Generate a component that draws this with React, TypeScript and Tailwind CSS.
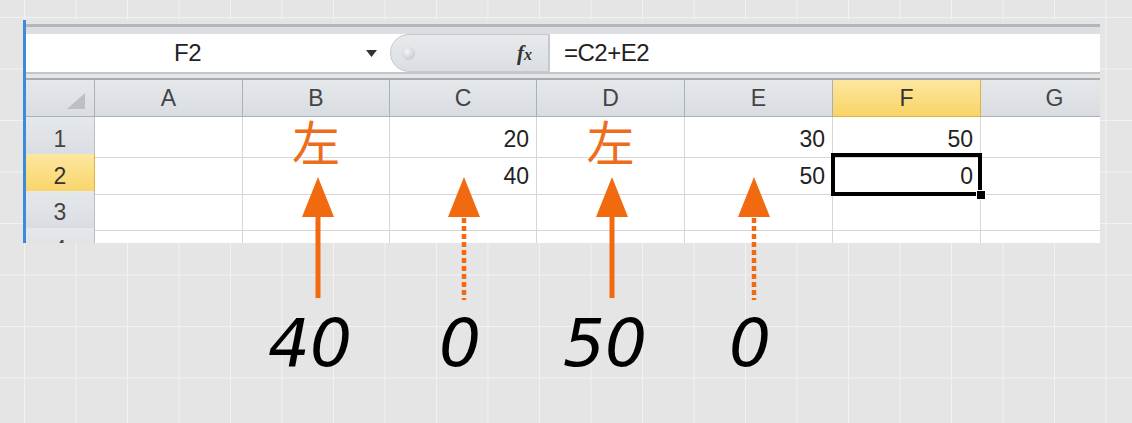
import React from 'react';

type Cell = { text?: string; kanji?: boolean; selected?: boolean };

const columns = ['A', 'B', 'C', 'D', 'E', 'F', 'G'];

const rows: { label: string; cells: Cell[] }[] = [
  { label: '1', cells: [{}, { text: '左', kanji: true }, { text: '20' }, { text: '左', kanji: true }, { text: '30' }, { text: '50' }, {}] },
  { label: '2', cells: [{}, {}, { text: '40' }, {}, { text: '50' }, { text: '0', selected: true }, {}] },
  { label: '3', cells: [{}, {}, {}, {}, {}, {}, {}] },
  { label: '4', cells: [{}, {}, {}, {}, {}, {}, {}] },
];

const gridCols = 'grid grid-cols-[69px_148px_147px_147px_148px_148px_148px_148px]';

const Arrow = ({ x, dashed }: { x: number; dashed?: boolean }) => (
  <g fill="#f26a10" stroke="none">
    <polygon points={`${x},177 ${x - 16},217 ${x + 16},217`} />
    {dashed ? (
      <line x1={x} y1={218} x2={x} y2={300} stroke="#f26a10" strokeWidth={4.5} strokeDasharray="5 3" />
    ) : (
      <rect x={x - 2.5} y={214} width={5} height={84} />
    )}
  </g>
);

export default function App() {
  const selectedRow = '2';
  const selectedCol = 'F';

  return (
    <div className="relative w-[1132px] h-[423px] overflow-hidden bg-[#e5e5e5] bg-[linear-gradient(to_right,#f2f2f2_1px,transparent_1px),linear-gradient(to_bottom,#f2f2f2_1px,transparent_1px)] bg-[size:51.5px_51.5px] bg-[position:24px_17px] font-['Liberation_Sans',sans-serif]">
      {/* Spreadsheet window */}
      <div className="ml-[23px] mt-[20px] w-[1077px] h-[223px] border-l-[3px] border-[#3d8ad8] overflow-hidden flex flex-col bg-white">
        {/* ribbon remnants */}
        <div className="h-[4px] shrink-0 bg-[#e2e4e6]" />
        <div className="h-[3px] shrink-0 bg-[#b4b7ba]" />
        <div className="h-[7px] shrink-0 bg-[#dcdee1]" />

        {/* Formula bar */}
        <div className="h-[38px] shrink-0 flex bg-white">
          <div className="w-[364px] flex items-center">
            <span className="pl-[148px] text-[24px] text-[#222] tracking-[-0.5px]">F2</span>
            <div className="flex-1" />
            <svg width="11" height="7" viewBox="0 0 11 7" className="mr-[13px]">
              <polygon points="0,0 11,0 5.5,7" fill="#333" />
            </svg>
          </div>
          <div className="w-[159px] h-full flex items-center rounded-l-full border border-[#c4c8cc] bg-[linear-gradient(#e8eaed,#dadee2)]">
            <div className="ml-[11px] w-[13px] h-[13px] rounded-full bg-[radial-gradient(circle_at_40%_35%,#f4f5f6,#b9bdc2)]" />
            <div className="flex-1" />
            <span className="mr-[16px] font-['Liberation_Serif',serif] italic font-bold text-[21px] text-[#333] leading-none">
              f<span className="text-[16px]">x</span>
            </span>
          </div>
          <div className="flex-1 flex items-center border-l border-[#c5c8cc] pl-[14px] text-[24px] text-[#222] tracking-[-0.5px]">
            =C2+E2
          </div>
        </div>

        <div className="h-[2px] shrink-0 bg-[#c3c6c9]" />
        <div className="h-[4px] shrink-0 bg-[#e4e6e8]" />
        <div className="h-[2px] shrink-0 bg-[#a8acb0]" />

        {/* Column headers */}
        <div className={`${gridCols} h-[37px] shrink-0`}>
          <div className="relative bg-[linear-gradient(#e5e8eb,#d9dde1)] border-r border-b border-[#abb0b6]">
            <svg width="18" height="16" viewBox="0 0 18 16" className="absolute right-[9px] bottom-[7px]">
              <polygon points="18,0 18,16 0,16" fill="#bcc0c5" />
            </svg>
          </div>
          {columns.map((c) => (
            <div
              key={c}
              className={
                c === selectedCol
                  ? 'flex items-center justify-center bg-[linear-gradient(#fde7a0,#f9d466)] border-r border-b border-[#dcb24c] text-[23px] text-[#333]'
                  : 'flex items-center justify-center bg-[linear-gradient(#e5e8eb,#d9dde1)] border-r border-b border-[#abb0b6] text-[23px] text-[#444]'
              }
            >
              {c}
            </div>
          ))}
        </div>

        {/* Rows */}
        {rows.map((row) => (
          <div key={row.label} className={`${gridCols} h-[37px] shrink-0`}>
            <div
              className={
                row.label === selectedRow
                  ? 'flex items-center justify-center pt-[4px] bg-[linear-gradient(#fde7a0,#f9d466)] border-r border-b border-[#dcb24c] text-[23px] text-[#333]'
                  : 'flex items-center justify-center pt-[4px] bg-[linear-gradient(#e5e8eb,#d9dde1)] border-r border-b border-[#b9bec4] text-[23px] text-[#444]'
              }
            >
              {row.label}
            </div>
            {row.cells.map((cell, i) => (
              <div
                key={i}
                className="relative flex items-center justify-end pr-[7px] pt-[5px] border-r border-b border-[#d6d6d6] text-[23px] text-[#222]"
              >
                {cell.kanji ? (
                  <span className="absolute z-10 top-[-1px] left-1/2 -translate-x-1/2 font-['Noto_Sans_CJK_JP',sans-serif] text-[48px] leading-[48px] text-[#ec6e1c]">
                    {cell.text}
                  </span>
                ) : (
                  cell.text
                )}
                {cell.selected && (
                  <>
                    <div className="absolute z-20 left-[-2px] top-[-1px] right-[-2px] bottom-[-2px] border-[4px] border-black" />
                    <div className="absolute z-20 right-[-6px] bottom-[-6px] w-[10px] h-[10px] bg-black border border-white" />
                  </>
                )}
              </div>
            ))}
          </div>
        ))}
      </div>

      {/* Results */}
      <div className="mt-[68px] flex h-[66px] pl-[260px] font-['DejaVu_Sans',sans-serif] italic text-[66px] leading-[66px] text-black">
        <span className="w-[100px] text-center">40</span>
        <span className="ml-[50px] w-[100px] text-center">0</span>
        <span className="ml-[45px] w-[100px] text-center">50</span>
        <span className="ml-[45px] w-[100px] text-center">0</span>
      </div>

      {/* Annotation arrows */}
      <svg className="absolute left-0 top-0 pointer-events-none" width="1132" height="423" viewBox="0 0 1132 423">
        <Arrow x={318} />
        <Arrow x={464} dashed />
        <Arrow x={612} />
        <Arrow x={754} dashed />
      </svg>
    </div>
  );
}
